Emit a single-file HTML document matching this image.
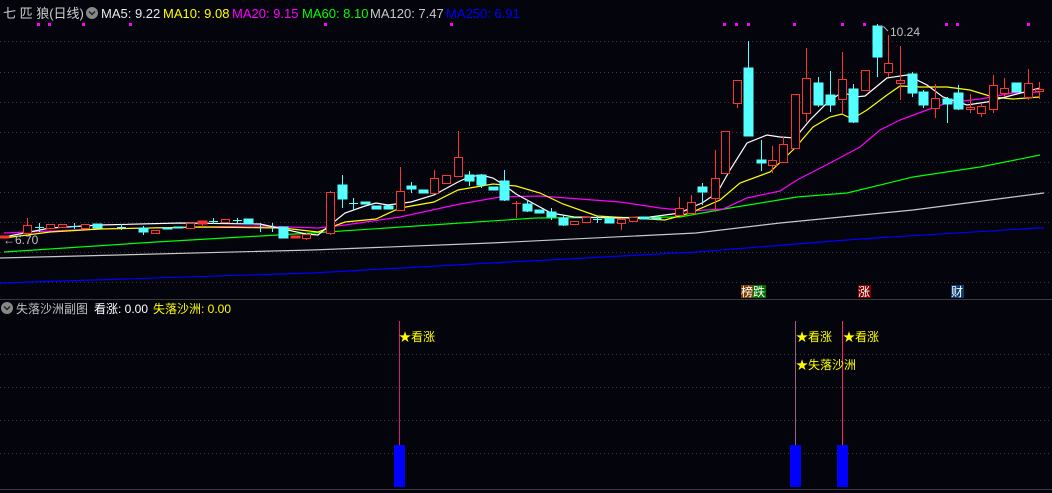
<!DOCTYPE html>
<html><head><meta charset="utf-8"><style>
html,body{margin:0;padding:0;background:#04040c;width:1052px;height:493px;overflow:hidden}
svg{display:block}
text{font-family:"Liberation Sans","Noto Sans CJK SC",sans-serif}
</style></head><body>
<svg width="1052" height="493" viewBox="0 0 1052 493">
<rect width="1052" height="493" fill="#04040c"/>
<g stroke="#3a3a3a" stroke-dasharray="1 3" stroke-width="1">
<line x1="0" y1="41.5" x2="1052" y2="41.5"/><line x1="0" y1="72.5" x2="1052" y2="72.5"/>
<line x1="0" y1="102.5" x2="1052" y2="102.5"/><line x1="0" y1="132.5" x2="1052" y2="132.5"/>
<line x1="0" y1="162.5" x2="1052" y2="162.5"/><line x1="0" y1="192.5" x2="1052" y2="192.5"/>
<line x1="0" y1="222.5" x2="1052" y2="222.5"/><line x1="0" y1="252.5" x2="1052" y2="252.5"/>
<line x1="0" y1="282.5" x2="1052" y2="282.5"/>
<line x1="0" y1="354.5" x2="1052" y2="354.5"/><line x1="0" y1="387.5" x2="1052" y2="387.5"/>
<line x1="0" y1="420.5" x2="1052" y2="420.5"/><line x1="0" y1="453.5" x2="1052" y2="453.5"/>
</g>
<line x1="0" y1="299.5" x2="1052" y2="299.5" stroke="#3a3a3a"/>
<line x1="0" y1="489.5" x2="1052" y2="489.5" stroke="#3a3a3a"/>

<!-- MA lines -->
<g fill="none" stroke-width="1.2">
<polyline stroke="#0000ff" points="0,283 312,273 491,263 696,252 860,239 1038,228 1044,228"/>
<polyline stroke="#c8c8c8" points="0,258 312,250 491,243 696,233 780,223 913,210 1044,193"/>
<polyline stroke="#00ff00" points="4,252 156,242 312,233 446,224 536,218 680,217 730,208 797,197 847,193 913,177 980,167 1040,155"/>
<polyline stroke="#ff00ff" points="4,233 100,229 200,227 260,226 318,228 345,225 400,217 460,204 500,197 540,196 580,199 620,202 660,208 690,211 723,209 747,198 780,191 797,180 830,163 860,147 880,130 900,120 927,110 947,103 980,99 1013,93 1040,92"/>
<polyline stroke="#ffff00" points="4,238 50,232 100,229 200,227 283,228 318,232 345,222 376,219 400,208 434,202 458,190 493,184 516,186 540,193 563,204 597,216 630,218 665,220 690,213 720,200 740,183 770,172 795,148 813,127 830,117 842,114 852,119 867,110 887,95 900,86 920,87 947,87 970,90 993,97 1013,99 1040,97"/>
<polyline stroke="#ffffff" points="4,237 50,228 100,225 180,223 260,224 283,229 306,234 318,235 330,225 345,213 365,206 376,203 388,205 411,202 434,195 458,182 469,177 481,175 493,178 504,185 516,194 527,200 551,213 574,217 620,218 650,217 680,213 690,208 702,203 717,193 730,170 747,143 767,135 780,137 795,138 810,120 827,103 842,92 855,97 865,96 887,78 907,75 927,85 943,97 967,105 987,102 1013,95 1040,88"/>
</g>

<!-- candles -->
<g stroke-width="1">
<g stroke="#ff3232" fill="#04040c">
<line x1="27.5" y1="218" x2="27.5" y2="235"/><rect x="23.5" y="225.5" width="8" height="8"/>
<rect x="46.5" y="224.5" width="8" height="4"/><rect x="58.5" y="224.5" width="8" height="3"/>
<rect x="81.5" y="224.5" width="8" height="4"/><rect x="151.5" y="230.5" width="8" height="3"/>
<rect x="186.5" y="223.5" width="8" height="5"/><line x1="202.5" y1="221" x2="202.5" y2="227"/><rect x="198" y="221" width="9" height="3" fill="#ff3232"/>
<rect x="221.5" y="219.5" width="8" height="3"/><rect x="291" y="236" width="9" height="2" fill="#ff3232"/>
<line x1="306.5" y1="233" x2="306.5" y2="240"/><rect x="302.5" y="234.5" width="8" height="4"/>
<line x1="330.5" y1="191" x2="330.5" y2="235"/><rect x="326.5" y="192.5" width="8" height="41"/>
<line x1="400.5" y1="167" x2="400.5" y2="211"/><rect x="396.5" y="191.5" width="8" height="19"/>
<line x1="434.5" y1="170" x2="434.5" y2="194"/><rect x="430.5" y="178.5" width="8" height="15"/>
<rect x="442.5" y="175.5" width="8" height="8"/>
<line x1="458.5" y1="131" x2="458.5" y2="177"/><rect x="454.5" y="157.5" width="8" height="19"/>
<line x1="516.5" y1="201" x2="516.5" y2="218"/><line x1="512" y1="203.5" x2="521" y2="203.5"/>
<rect x="570.5" y="221.5" width="8" height="3"/><rect x="582.5" y="217.5" width="8" height="5"/>
<line x1="621.5" y1="218" x2="621.5" y2="230"/><rect x="617.5" y="219.5" width="8" height="4"/>
<rect x="629.5" y="217.5" width="8" height="4"/>
<line x1="679.5" y1="197" x2="679.5" y2="216"/><rect x="675.5" y="208.5" width="8" height="7"/>
<line x1="691.5" y1="195" x2="691.5" y2="215"/><rect x="687.5" y="202.5" width="8" height="11"/>
<line x1="715.5" y1="150" x2="715.5" y2="212"/><rect x="711.5" y="178.5" width="8" height="20"/>
<rect x="721.5" y="131.5" width="8" height="42"/>
<line x1="737.5" y1="80" x2="737.5" y2="108"/><rect x="733.5" y="80.5" width="8" height="23"/>
<line x1="772.5" y1="146" x2="772.5" y2="173"/><rect x="768.5" y="160.5" width="8" height="5"/>
<line x1="783.5" y1="137" x2="783.5" y2="163"/><rect x="779.5" y="144.5" width="8" height="18"/>
<rect x="791.5" y="94.5" width="8" height="54"/>
<line x1="806.5" y1="48" x2="806.5" y2="122"/><rect x="802.5" y="78.5" width="8" height="35"/>
<line x1="842.5" y1="52" x2="842.5" y2="114"/><rect x="838.5" y="79.5" width="8" height="20"/>
<rect x="861.5" y="70.5" width="8" height="20"/>
<line x1="888.5" y1="35" x2="888.5" y2="77"/><rect x="884.5" y="63.5" width="8" height="9"/>
<line x1="900.5" y1="46" x2="900.5" y2="100"/><rect x="896.5" y="80.5" width="8" height="3"/>
<line x1="935.5" y1="84" x2="935.5" y2="118"/><rect x="931.5" y="98.5" width="8" height="10"/>
<line x1="970.5" y1="94" x2="970.5" y2="113"/><rect x="966.5" y="107.5" width="8" height="2"/>
<line x1="981.5" y1="104" x2="981.5" y2="117"/><rect x="977.5" y="106.5" width="8" height="7"/>
<line x1="993.5" y1="75" x2="993.5" y2="113"/><rect x="989.5" y="85.5" width="8" height="24"/>
<line x1="1004.5" y1="78" x2="1004.5" y2="97"/><rect x="1000.5" y="88.5" width="8" height="5"/>
<line x1="1028.5" y1="69" x2="1028.5" y2="100"/><rect x="1024.5" y="83.5" width="8" height="14"/>
<line x1="1039.5" y1="82" x2="1039.5" y2="99"/><rect x="1035.5" y="89.5" width="8" height="2"/>
<rect x="0" y="236" width="9" height="2" fill="#ff3232"/>
</g>
<g stroke="#54ffff" fill="#54ffff">
<line x1="39.5" y1="223" x2="39.5" y2="232"/><line x1="35" y1="227.5" x2="44" y2="227.5"/>
<line x1="74.5" y1="223" x2="74.5" y2="229"/><line x1="70" y1="226.5" x2="79" y2="226.5"/>
<rect x="93" y="224" width="9" height="4"/><line x1="121.5" y1="224" x2="121.5" y2="230"/><line x1="117" y1="227.5" x2="126" y2="227.5"/>
<line x1="143.5" y1="226" x2="143.5" y2="235"/><rect x="139" y="228" width="9" height="4"/>
<rect x="163" y="228" width="9" height="1"/><rect x="174" y="227" width="9" height="1"/>
<line x1="213.5" y1="218" x2="213.5" y2="224"/><line x1="209" y1="221.5" x2="218" y2="221.5"/>
<line x1="237.5" y1="218" x2="237.5" y2="223"/><line x1="233" y1="220.5" x2="242" y2="220.5"/>
<rect x="244" y="219" width="9" height="5"/>
<line x1="260.5" y1="223" x2="260.5" y2="232"/><line x1="272.5" y1="223" x2="272.5" y2="232"/>
<rect x="279" y="227" width="9" height="11"/>
<line x1="342.5" y1="175" x2="342.5" y2="208"/><rect x="338" y="185" width="9" height="14"/>
<line x1="353.5" y1="198" x2="353.5" y2="210"/><line x1="349" y1="203.5" x2="358" y2="203.5"/>
<rect x="361" y="202" width="9" height="2"/><rect x="372" y="206" width="9" height="3"/><rect x="384" y="206" width="9" height="3"/>
<line x1="411.5" y1="182" x2="411.5" y2="193"/><rect x="407" y="186" width="9" height="3"/>
<rect x="419" y="190" width="9" height="3"/>
<line x1="469.5" y1="171" x2="469.5" y2="186"/><rect x="465" y="175" width="9" height="6"/>
<line x1="481.5" y1="174" x2="481.5" y2="188"/><rect x="477" y="175" width="9" height="10"/>
<rect x="489" y="187" width="9" height="3"/>
<line x1="504.5" y1="170" x2="504.5" y2="201"/><rect x="500" y="181" width="9" height="19"/>
<line x1="527.5" y1="200" x2="527.5" y2="212"/><rect x="523" y="204" width="9" height="7"/>
<rect x="535" y="210" width="9" height="3"/>
<line x1="551.5" y1="208" x2="551.5" y2="220"/><rect x="547" y="212" width="9" height="5"/>
<line x1="563.5" y1="215" x2="563.5" y2="226"/><rect x="559" y="218" width="9" height="7"/>
<line x1="597.5" y1="216" x2="597.5" y2="223"/><line x1="593" y1="219.5" x2="602" y2="219.5"/>
<rect x="605" y="218" width="9" height="5"/><rect x="640" y="217" width="9" height="2"/><rect x="652" y="218" width="9" height="1"/>
<line x1="702.5" y1="183" x2="702.5" y2="205"/><rect x="698" y="187" width="9" height="5"/>
<line x1="748.5" y1="41" x2="748.5" y2="136"/><rect x="744" y="68" width="9" height="68"/>
<line x1="761.5" y1="140" x2="761.5" y2="171"/><rect x="757" y="160" width="9" height="3"/>
<line x1="818.5" y1="77" x2="818.5" y2="107"/><rect x="814" y="83" width="9" height="22"/>
<line x1="830.5" y1="71" x2="830.5" y2="112"/><rect x="826" y="95" width="9" height="10"/>
<line x1="853.5" y1="84" x2="853.5" y2="123"/><rect x="849" y="89" width="9" height="33"/>
<line x1="877.5" y1="24" x2="877.5" y2="77"/><rect x="873" y="26" width="9" height="31"/>
<line x1="912.5" y1="72" x2="912.5" y2="97"/><rect x="908" y="74" width="9" height="19"/>
<line x1="923.5" y1="90" x2="923.5" y2="108"/><rect x="919" y="92" width="9" height="13"/>
<line x1="947.5" y1="97" x2="947.5" y2="123"/><rect x="943" y="99" width="9" height="5"/>
<line x1="958.5" y1="85" x2="958.5" y2="110"/><rect x="954" y="93" width="9" height="16"/>
<rect x="1012" y="83" width="9" height="9"/>
</g>
</g>

<!-- magenta dots -->
<g fill="#ff00ff">
<rect x="37" y="23" width="3" height="3"/><rect x="48" y="23" width="3" height="3"/><rect x="82" y="23" width="3" height="3"/><rect x="129" y="23" width="3" height="3"/><rect x="324" y="23" width="3" height="3"/><rect x="450" y="23" width="3" height="3"/>
<rect x="723" y="23" width="3" height="3"/><rect x="735" y="23" width="3" height="3"/><rect x="747" y="23" width="3" height="3"/><rect x="793" y="23" width="3" height="3"/><rect x="841" y="23" width="3" height="3"/><rect x="863" y="23" width="3" height="3"/><rect x="945" y="23" width="3" height="3"/><rect x="956" y="23" width="3" height="3"/><rect x="1027" y="23" width="3" height="3"/>
</g>

<!-- price labels -->
<path d="M879,26 L884,27 L888,31" stroke="#aaa" fill="none"/>
<text x="890" y="36" font-size="12" fill="#c0c0c0">10.24</text>
<text x="3" y="244" font-size="12" fill="#c0c0c0">←6.70</text>

<!-- header -->
<text x="3" y="18" font-size="13" fill="#d0d0d0">七 匹 狼(日线)</text>
<circle cx="92" cy="13" r="6" fill="#888"/><path d="M89,11.5 L92,14.5 L95,11.5" stroke="#222" stroke-width="1.5" fill="none"/>
<text x="101" y="18" font-size="13" fill="#e8e8e8">MA5: 9.22</text>
<text x="163" y="18" font-size="13" fill="#ffff00">MA10: 9.08</text>
<text x="232" y="18" font-size="13" fill="#ff00ff">MA20: 9.15</text>
<text x="302" y="18" font-size="13" fill="#00ff00">MA60: 8.10</text>
<text x="370" y="18" font-size="13" fill="#c8c8c8">MA120: 7.47</text>
<text x="446" y="18" font-size="13" fill="#0000ff">MA250: 6.91</text>

<!-- tags -->
<rect x="741" y="285" width="12" height="13" fill="#7a3f00"/><rect x="753" y="285" width="13" height="13" fill="#007000"/>
<text x="741" y="296" font-size="12" fill="#fff">榜跌</text>
<rect x="858" y="285" width="13" height="13" fill="#800000"/><text x="858" y="296" font-size="12" fill="#fff">涨</text>
<rect x="951" y="285" width="13" height="13" fill="#0a3a70"/><text x="951" y="296" font-size="12" fill="#fff">财</text>

<!-- lower panel header -->
<circle cx="7" cy="308" r="6" fill="#888"/><path d="M4,306.5 L7,309.5 L10,306.5" stroke="#222" stroke-width="1.5" fill="none"/>
<text x="16" y="313" font-size="12" fill="#c0c0c0">失落沙洲副图</text>
<text x="94" y="313" font-size="12" fill="#fff">看涨: 0.00</text>
<text x="153" y="313" font-size="12" fill="#ffff00">失落沙洲: 0.00</text>

<!-- signals -->
<line x1="399.5" y1="321" x2="399.5" y2="446" stroke="#d02070"/>
<line x1="795.5" y1="321" x2="795.5" y2="446" stroke="#a06080"/>
<line x1="842.5" y1="321" x2="842.5" y2="446" stroke="#ff2060"/>
<rect x="394" y="445" width="11" height="42" fill="#0000ff"/>
<rect x="790" y="445" width="11" height="42" fill="#0000ff"/>
<rect x="837" y="445" width="11" height="42" fill="#0000ff"/>
<g font-size="12" fill="#ffff00">
<text x="399" y="341">★看涨</text>
<text x="796" y="341">★看涨</text>
<text x="843" y="341">★看涨</text>
<text x="796" y="369">★失落沙洲</text>
</g>
</svg>
</body></html>
